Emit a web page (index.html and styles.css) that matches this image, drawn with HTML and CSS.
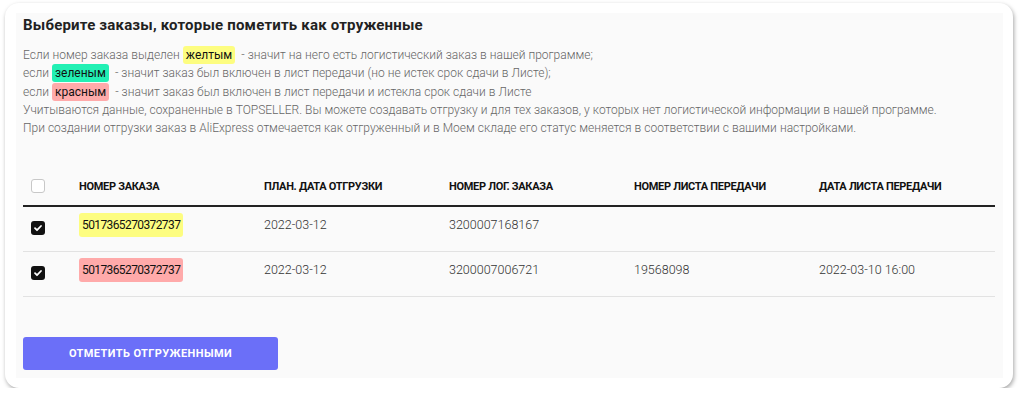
FILE: index.html
```html
<!DOCTYPE html>
<html lang="ru">
  <head>
    <meta charset="utf-8" />
    <meta name="viewport" content="width=device-width, initial-scale=1.0" />
    <title>Отметить отгруженными</title>
    <link rel="stylesheet" href="styles.css">
  </head>

  <body>
    <div class="kort">
      <div class="indhold">
        <h1>Выберите заказы, которые пометить как отруженные</h1>
        <p class="info">
          Если номер заказа выделен <span class="mark gul">желтым</span>&nbsp; - значит на него есть логистический заказ в нашей программе;<br>
          если <span class="mark groen">зеленым</span>&nbsp; - значит заказ был включен в лист передачи (но не истек срок сдачи в Листе);<br>
          если <span class="mark roed">красным</span>&nbsp; - значит заказ был включен в лист передачи и истекла срок сдачи в Листе<br>
          Учитываются данные, сохраненные в TOPSELLER. Вы можете создавать отгрузку и для тех заказов, у которых нет логистической информации в нашей программе.<br>
          При создании отгрузки заказ в AliExpress отмечается как отгруженный и в Моем складе его статус меняется в соответствии с вашими настройками.
        </p>

        <table class="ordrer">
          <colgroup>
            <col class="c-check">
            <col class="c-kol">
            <col class="c-kol">
            <col class="c-kol">
            <col class="c-kol">
            <col>
          </colgroup>
          <thead>
            <tr>
              <th><span class="boks"></span></th>
              <th>Номер заказа</th>
              <th>План. дата отгрузки</th>
              <th>Номер лог. заказа</th>
              <th>Номер листа передачи</th>
              <th>Дата листа передачи</th>
            </tr>
          </thead>
          <tbody>
            <tr>
              <td><span class="boks valgt"><svg viewBox="0 0 14 14" width="14" height="14"><path d="M4 7.2l2 2 4-4.2" fill="none" stroke="#fff" stroke-width="1.8" stroke-linecap="round" stroke-linejoin="round"/></svg></span></td>
              <td><span class="nr gul">5017365270372737</span></td>
              <td>2022-03-12</td>
              <td>3200007168167</td>
              <td></td>
              <td></td>
            </tr>
            <tr>
              <td><span class="boks valgt"><svg viewBox="0 0 14 14" width="14" height="14"><path d="M4 7.2l2 2 4-4.2" fill="none" stroke="#fff" stroke-width="1.8" stroke-linecap="round" stroke-linejoin="round"/></svg></span></td>
              <td><span class="nr roed">5017365270372737</span></td>
              <td>2022-03-12</td>
              <td>3200007006721</td>
              <td>19568098</td>
              <td>2022-03-10 16:00</td>
            </tr>
          </tbody>
        </table>

        <button class="knap">Отметить отгруженными</button>
      </div>
    </div>
  </body>
</html>
```

FILE: styles.css
```css
body {
  margin: 0;
  background: #fff;
  font-family: Roboto, "Noto Sans", sans-serif;
}

.kort {
  margin: 3px 6px 0 5px;
  padding: 10px 10px 10px 11px;
  width: 987px;
  background: #fff;
  border-radius: 14px;
  box-shadow: 1px 2px 4px rgba(0, 0, 0, 0.35);
}

.indhold {
  background: #fafafa;
  padding: 2px 8px 8px 7px;
}

h1 {
  margin: 0;
  font-size: 15px;
  line-height: 20px;
  font-weight: 700;
  letter-spacing: 0.2px;
  color: #222;
}

.info {
  margin: 11px 0 0;
  font-size: 12px;
  line-height: 18.3px;
  color: #666;
  font-weight: 300;
  word-spacing: 0.1px;
}

.mark {
  display: inline-block;
  padding: 0 3px;
  line-height: 18px;
  border-radius: 3px;
  color: #111;
  font-weight: 400;
  word-spacing: 0;
}

.gul {
  background: #fdfd80;
}

.groen {
  background: #22f0b4;
}

.roed {
  background: #ffaaaa;
}

.ordrer {
  margin-top: 30px;
  width: 972px;
  border-collapse: collapse;
  table-layout: fixed;
}

.c-check {
  width: 56px;
}

.c-kol {
  width: 185px;
}

th {
  height: 38px;
  padding: 0;
  text-align: left;
  font-size: 11px;
  font-weight: 700;
  text-transform: uppercase;
  letter-spacing: -0.3px;
  color: #111;
  border-bottom: 2px solid #222;
}

td {
  padding: 6px 0 14px;
  font-size: 12.5px;
  line-height: 24px;
  color: #333;
  font-weight: 300;
  border-bottom: 1px solid #e2e2e2;
}

th:first-child,
td:first-child {
  padding-left: 8px;
}

.boks {
  display: block;
  box-sizing: border-box;
  width: 14px;
  height: 14px;
  border: 1px solid #c8c8c8;
  border-radius: 3px;
  background: #fff;
}

td .boks {
  margin-top: 5px;
}

.boks.valgt {
  border: 0;
  background: #111;
}

.boks svg {
  display: block;
}

.nr {
  display: inline-block;
  padding: 0 3px;
  border-radius: 3px;
  font-size: 12px;
  color: #111;
  font-weight: 400;
  letter-spacing: -0.6px;
}

.knap {
  display: block;
  margin-top: 40px;
  width: 255px;
  height: 33px;
  border: 0;
  border-radius: 3px;
  background: #6b6ff8;
  color: #fff;
  font-family: Roboto, "Noto Sans", sans-serif;
  font-size: 11px;
  font-weight: 700;
  text-transform: uppercase;
  letter-spacing: 0.4px;
}
```
